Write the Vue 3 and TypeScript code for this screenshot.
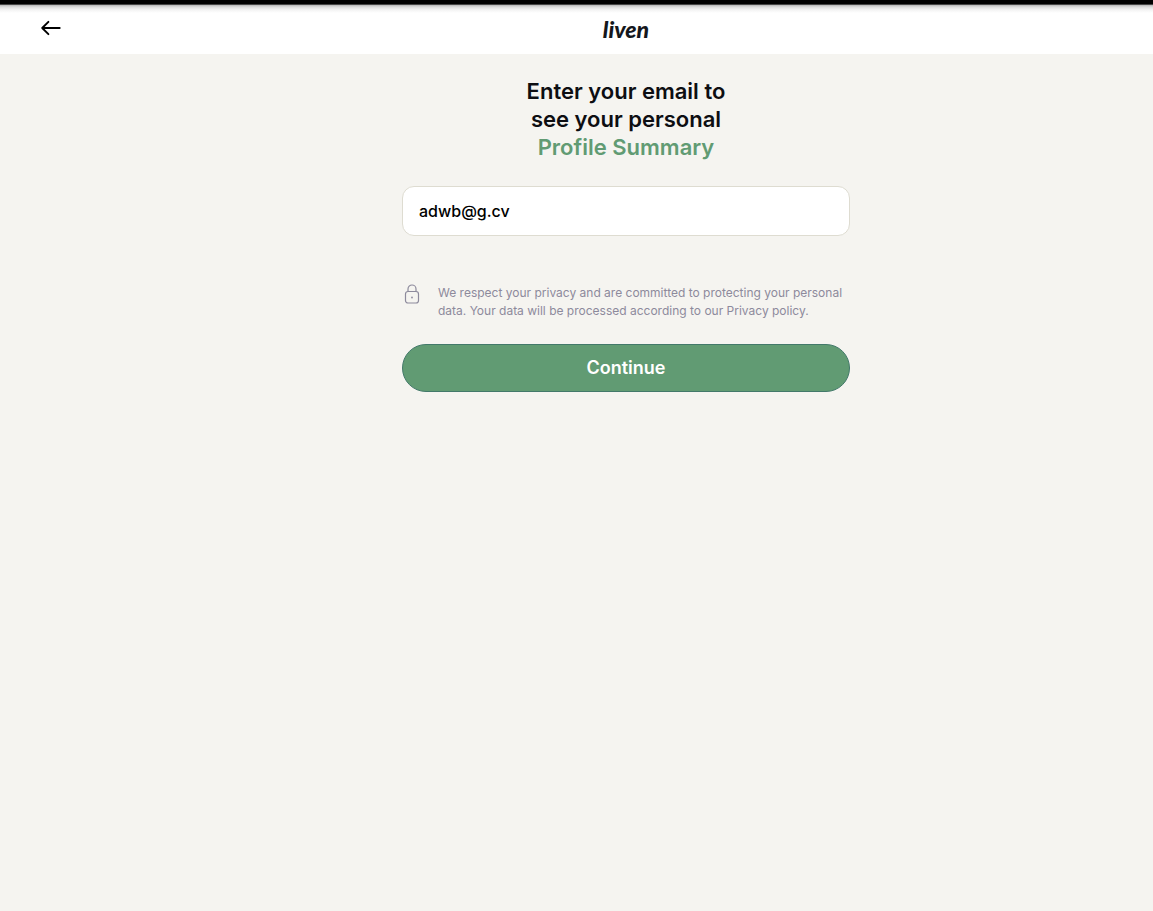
<script setup lang="ts">
import { ref } from 'vue'

const email = ref<string>('adwb@g.cv')
</script>

<template>
  <div class="page">
    <header class="topbar">
      <button class="back" type="button" aria-label="Go back">
        <svg width="22" height="18" viewBox="0 0 22 18" fill="none" stroke="currentColor" stroke-width="1.9" stroke-linecap="round" stroke-linejoin="round" aria-hidden="true">
          <path d="M19.7 9H2.2M8.4 2.8L2.2 9l6.2 6.2" />
        </svg>
      </button>
      <div class="brand-area">
        <span class="brand">liven</span>
      </div>
    </header>

    <main class="content">
      <form class="form" @submit.prevent>
        <h1 class="title">
          <label for="email">Enter your email to<br />see your personal<br /><span class="accent">Profile Summary</span></label>
        </h1>
        <input id="email" v-model="email" class="field" type="email" autocomplete="email" />
        <div class="privacy">
          <svg class="lock" width="20" height="22" viewBox="0 0 20 22" fill="none" stroke="currentColor" stroke-width="1.2" aria-hidden="true">
            <rect x="3.5" y="7.5" width="13" height="11.5" rx="2.5" />
            <path d="M6 7.5V5a4 4 0 0 1 8 0v2.5" />
            <circle cx="10" cy="13.5" r="0.9" fill="currentColor" stroke="none" />
          </svg>
          <p>We respect your privacy and are committed to protecting your personal data. Your data will be processed according to our Privacy policy.</p>
        </div>
        <button class="continue" type="submit">Continue</button>
      </form>
    </main>
  </div>
</template>

<style>
body {
  background: #f5f4f0;
}
</style>

<style scoped>
.page {
  min-height: 100vh;
  box-sizing: border-box;
  border-top: 4px solid #000;
  background: #f5f4f0;
  color: #0d0e12;
  font-family: Inter, "Liberation Sans", sans-serif;
}

.topbar {
  display: flex;
  align-items: center;
  height: 50px;
  background: linear-gradient(#444 1px, #b4b4b4 1px, #dcdcdc 3px, #f4f4f4 6px, #fff 9px);
}

.back {
  display: flex;
  width: 99px;
  padding: 0 0 2px 40px;
  border: 0;
  background: none;
  color: #000;
  cursor: pointer;
}

.brand-area {
  flex: 1;
  text-align: center;
}

.brand {
  font: italic 900 23px/24px Lato, Inter, sans-serif;
  color: #14171c;
}

.content {
  padding: 23px 0 24px 99px;
}

.form {
  display: flex;
  flex-direction: column;
  max-width: 448px;
  margin: 0 auto;
}

.title {
  margin: 0 0 25px;
  font-size: 22px;
  font-weight: 600;
  line-height: 28px;
  text-align: center;
}

.accent {
  color: #619b73;
}

.field {
  box-sizing: border-box;
  width: 100%;
  height: 50px;
  padding: 0 16px;
  border: 1px solid #dedcd1;
  border-radius: 12px;
  background: #fff;
  color: #000;
  font: 500 16px/24px Inter, "Liberation Sans", sans-serif;
  outline: none;
}

.privacy {
  display: flex;
  gap: 16px;
  margin: 48px 0 24px;
  color: #8d8a9c;
}

.privacy p {
  margin: 0;
  font-size: 12px;
  line-height: 18px;
}

.lock {
  flex: none;
}

.continue {
  height: 48px;
  border: 1px solid #43796a;
  border-radius: 24px;
  background: #619b73;
  color: #fff;
  font: 600 18px/24px Inter, "Liberation Sans", sans-serif;
  cursor: pointer;
}
</style>
